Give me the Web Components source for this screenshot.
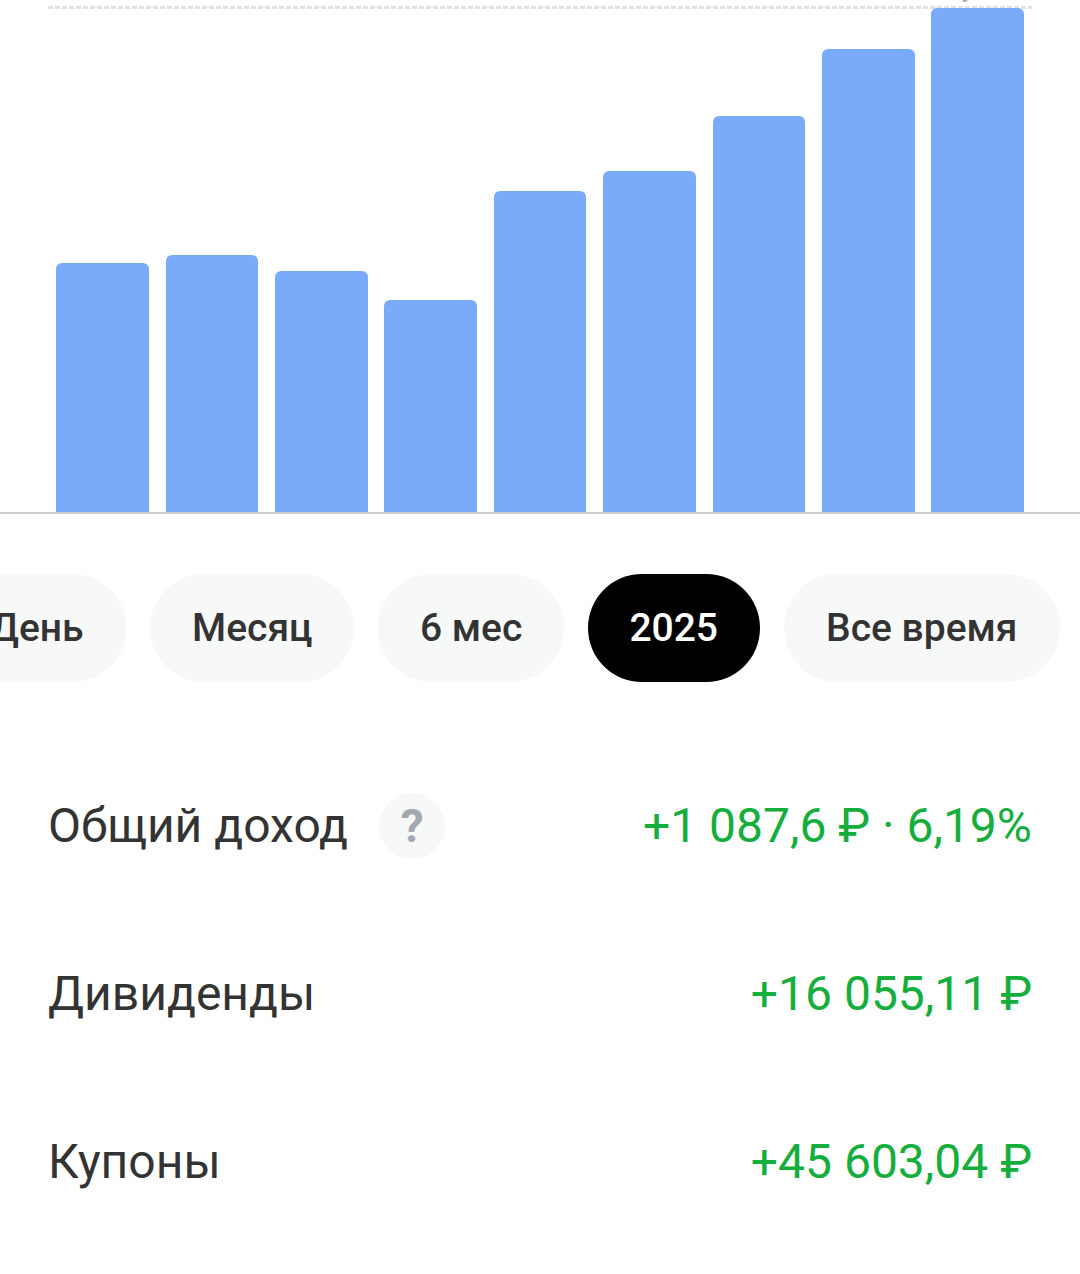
<!DOCTYPE html>
<html lang="ru">
<head>
<meta charset="utf-8">
<title>Доход</title>
<style>
  html, body { margin: 0; background: #fff; font-family: Roboto, "Liberation Sans", sans-serif; }
  body { width: 1080px; height: 1274px; overflow: hidden; }
</style>
</head>
<body>
<income-chart values="249,257,241,212,321,341,396,463,504"></income-chart>
<period-tabs>
  <period-tab>День</period-tab>
  <period-tab style="--pad:42px">Месяц</period-tab>
  <period-tab style="--pad:41.5px">6 мес</period-tab>
  <period-tab style="--pad:41.5px" active>2025</period-tab>
  <period-tab>Все время</period-tab>
</period-tabs>
<income-list>
  <income-row value="+1 087,6 ₽ · 6,19%" hint>Общий доход</income-row>
  <income-row value="+16 055,11 ₽">Дивиденды</income-row>
  <income-row value="+45 603,04 ₽">Купоны</income-row>
</income-list>

<script>
class IncomeChart extends HTMLElement {
  constructor() {
    super();
    this.attachShadow({ mode: 'open' });
  }

  connectedCallback() {
    const bars = this.getAttribute('values').split(',')
      .map(h => `<div class="bar" style="height:${h}px"></div>`).join('');
    this.shadowRoot.innerHTML = `
      <style>
        :host {
          display: block;
          height: 514px;
          box-sizing: border-box;
          border-bottom: 2px solid #c9ced2;
          position: relative;
          overflow: hidden;
        }
        .grid {
          position: absolute;
          left: 48px;
          right: 48px;
          top: 6px;
          height: 3px;
          background: repeating-linear-gradient(90deg, #e2e2e2 0 5px, transparent 5px 7px);
        }
        .peak {
          position: absolute;
          right: 106px;
          top: -27px;
          font-size: 26px;
          line-height: 30px;
          color: #a9acb0;
        }
        .bars {
          position: absolute;
          left: 56.4px;
          bottom: 0;
          display: flex;
          align-items: flex-end;
          gap: 16.78px;
        }
        .bar {
          width: 92.6px;
          background: #79abfa;
          border-radius: 6px 6px 0 0;
        }
      </style>
      <div class="grid"></div>
      <div class="peak">у</div>
      <div class="bars">${bars}</div>
    `;
  }
}

class PeriodTabs extends HTMLElement {
  constructor() {
    super();
    this.attachShadow({ mode: 'open' });
    this.shadowRoot.innerHTML = `
      <style>
        :host {
          display: flex;
          justify-content: flex-end;
          gap: 24px;
          padding: 60px 20px 0 0;
          overflow: hidden;
        }
      </style>
      <slot></slot>
    `;
  }
}

class PeriodTab extends HTMLElement {
  constructor() {
    super();
    this.attachShadow({ mode: 'open' });
    this.shadowRoot.innerHTML = `
      <style>
        :host {
          display: block;
          flex: none;
          height: 108px;
          line-height: 108px;
          padding: 0 var(--pad, 42.5px);
          border-radius: 54px;
          background: #f7f8f8;
          color: #333;
          font-size: 39px;
          font-weight: 500;
          white-space: nowrap;
        }
        :host([active]) {
          background: #000;
          color: #fff;
        }
      </style>
      <slot></slot>
    `;
  }
}

class IncomeList extends HTMLElement {
  constructor() {
    super();
    this.attachShadow({ mode: 'open' });
    this.shadowRoot.innerHTML = `
      <style>
        :host {
          display: flex;
          flex-direction: column;
          padding: 59px 48px 0;
        }
      </style>
      <slot></slot>
    `;
  }
}

class IncomeRow extends HTMLElement {
  constructor() {
    super();
    this.attachShadow({ mode: 'open' });
  }

  connectedCallback() {
    const hint = this.hasAttribute('hint') ? '<span class="hint">?</span>' : '';
    this.shadowRoot.innerHTML = `
      <style>
        :host {
          display: flex;
          align-items: center;
          height: 168px;
          font-size: 48px;
          color: #333;
        }
        .hint {
          width: 66px;
          height: 66px;
          margin: 2px 0 0 31px;
          border-radius: 50%;
          background: #f7f8f8;
          color: #a3a7b3;
          font-size: 46px;
          font-weight: 700;
          display: flex;
          align-items: center;
          justify-content: center;
        }
        .value {
          margin-left: auto;
          color: #14ae3c;
        }
      </style>
      <slot></slot>${hint}
      <span class="value">${this.getAttribute('value')}</span>
    `;
  }
}

customElements.define('income-chart', IncomeChart);
customElements.define('period-tabs', PeriodTabs);
customElements.define('period-tab', PeriodTab);
customElements.define('income-list', IncomeList);
customElements.define('income-row', IncomeRow);
</script>
</body>
</html>
